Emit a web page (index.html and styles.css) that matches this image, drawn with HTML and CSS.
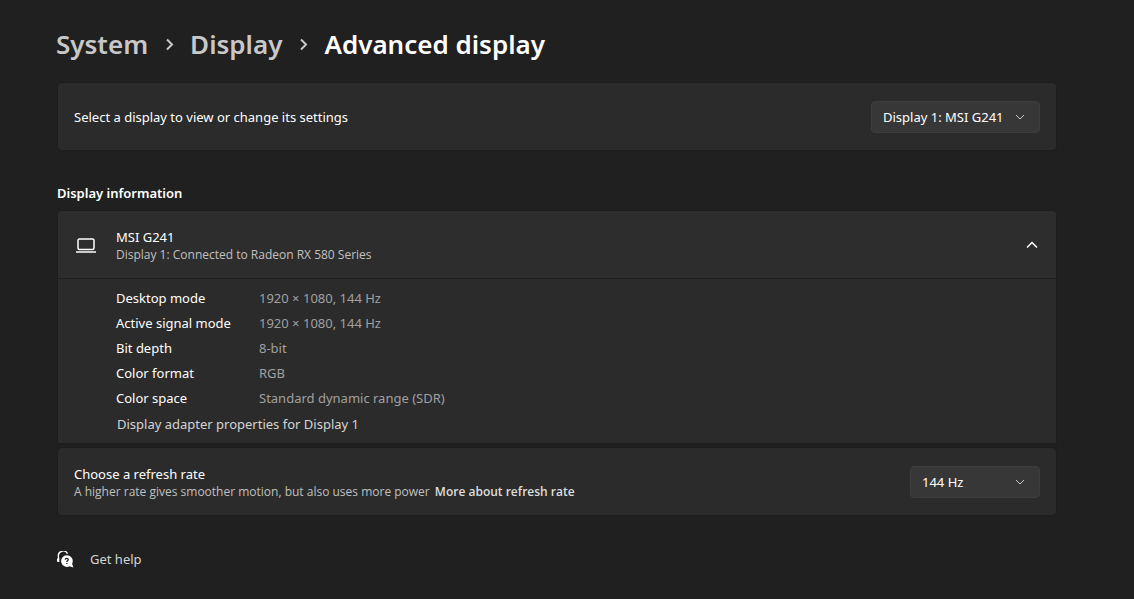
FILE: index.html
```html
<!DOCTYPE html>
<html lang="en">
<head>
<meta charset="utf-8">
<meta name="viewport" content="width=device-width, initial-scale=1">
<title>Advanced display</title>
<link rel="stylesheet" href="styles.css">
</head>
<body>
<main class="page">
  <nav class="breadcrumb" aria-label="Breadcrumb">
    <a class="crumb" href="#system">System</a>
    <svg class="crumb-arrow" viewBox="0 0 10 14" aria-hidden="true"><path d="M2 2.500l5 5-5 5"/></svg>
    <a class="crumb" href="#display">Display</a>
    <svg class="crumb-arrow" viewBox="0 0 10 14" aria-hidden="true"><path d="M2 2.500l5 5-5 5"/></svg>
    <h1 class="crumb crumb-current">Advanced display</h1>
  </nav>

  <section class="card row">
    <label class="label" for="display">Select a display to view or change its settings</label>
    <span class="picker picker-wide">
      <select class="select" id="display"><option>Display 1: MSI G241</option></select>
      <svg class="picker-arrow" viewBox="0 0 10 10" aria-hidden="true"><path d="M1 3l4 4 4-4"/></svg>
    </span>
  </section>

  <h2 class="section-title">Display information</h2>
  <section class="card card-open">
    <button class="row expander" type="button" aria-expanded="true" aria-controls="details">
      <svg class="laptop" viewBox="0 0 20 16" aria-hidden="true"><rect x="2" y="2" width="16" height="10.500" rx="1.500"/><path d="M0 15h20"/></svg>
      <span class="text">
        <span class="label">MSI G241</span>
        <span class="caption">Display 1: Connected to Radeon RX 580 Series</span>
      </span>
      <svg class="collapse-arrow" viewBox="0 0 12 8" aria-hidden="true"><path d="M1 6.500l5-5 5 5"/></svg>
    </button>
    <div class="details" id="details">
      <table class="facts">
        <tr><th scope="row">Desktop mode</th><td>1920 × 1080, 144 Hz</td></tr>
        <tr><th scope="row">Active signal mode</th><td>1920 × 1080, 144 Hz</td></tr>
        <tr><th scope="row">Bit depth</th><td>8-bit</td></tr>
        <tr><th scope="row">Color format</th><td>RGB</td></tr>
        <tr><th scope="row">Color space</th><td>Standard dynamic range (SDR)</td></tr>
      </table>
      <a class="adapter" href="#adapter">Display adapter properties for Display 1</a>
    </div>
  </section>

  <section class="card card-next row">
    <div class="text">
      <label class="label" for="rate">Choose a refresh rate</label>
      <p class="caption">A higher rate gives smoother motion, but also uses more power <a class="more" href="#refresh-rate">More about refresh rate</a></p>
    </div>
    <span class="picker">
      <select class="select" id="rate"><option>144 Hz</option></select>
      <svg class="picker-arrow" viewBox="0 0 10 10" aria-hidden="true"><path d="M1 3l4 4 4-4"/></svg>
    </span>
  </section>

  <a class="help" href="#help">
    <svg class="help-icon" viewBox="0 0 17 17" aria-hidden="true">
      <path class="headset" d="M1.500 9V6a4.800 4.800 0 0 1 9-3.200"/>
      <path class="solid" d="M0 7.500h2.300v3.500H1a1 1 0 0 1-1-1z"/>
      <path class="solid" d="M9.800 4.300a5.800 5.800 0 1 0 2.700 11l3.900 1.200-1.300-3.700a5.800 5.800 0 0 0-5.300-8.500z"/>
      <path class="mark" d="M8.300 8.700c0-1.900 3-1.900 3 0 0 1.100-1.500 1.100-1.500 2.200M9.800 11.900v1.200"/>
    </svg>
    Get help
  </a>
</main>
</body>
</html>
```
FILE: styles.css
```css
* { box-sizing: border-box; }
body {
  margin: 0;
  background: #202020;
  color: #fff;
  font: 13px/18px "Segoe UI", "Noto Sans", "Open Sans", sans-serif;
}
a { color: inherit; text-decoration: none; }
svg { flex: none; fill: none; stroke: currentColor; }

.page { padding: 25px 77px 30px 56px; }

.breadcrumb { display: flex; align-items: center; margin-bottom: 19px; }
.crumb { margin: 0; font-size: 26px; line-height: 38px; font-weight: 600; color: #c8c8c8; }
.crumb-current { color: #fff; }
.crumb-arrow { width: 10px; height: 14px; margin: 0 15px 0 17px; color: #c8c8c8; stroke-width: 2; }

.card, .section-title, .help { margin-left: 1px; }
.card { background: #2b2b2b; border: 1px solid #1d1d1d; border-radius: 5px; }
.card-open { border-radius: 5px 5px 0 0; }
.card-next { margin-top: 3px; }
.row { display: flex; align-items: center; justify-content: space-between; min-height: 69px; padding: 0 16px; }

.text { display: flex; flex-direction: column; padding-top: 2px; }
.caption { margin: 0; font-family: "Segoe UI", "Open Sans", sans-serif; font-size: 12px; color: #c0c0c0; }
.more { margin-left: 2px; font-weight: 600; color: #dedede; }

.picker { display: grid; align-items: center; width: 130px; }
.picker-wide { width: 169px; }
.select, .picker-arrow { grid-area: 1 / 1; }
.select {
  appearance: none;
  width: 100%;
  height: 32px;
  padding: 0 30px 0 11px;
  border: 1px solid #3d3d3d;
  border-radius: 4px;
  background: #373737;
  color: #fff;
  font: inherit;
}
.picker-arrow { justify-self: end; width: 10px; height: 10px; margin-right: 15px; color: #c8c8c8; pointer-events: none; }

.section-title { margin-top: 33px; margin-bottom: 8px; font-size: 13px; line-height: 18px; font-weight: 600; }
.expander {
  width: 100%;
  min-height: 68px;
  padding: 0 18px;
  border: 0;
  border-bottom: 1px solid #1d1d1d;
  border-radius: 4px 4px 0 0;
  background: #2d2d2d;
  color: inherit;
  font: inherit;
  text-align: left;
}
.laptop { width: 20px; height: 16px; margin-right: 20px; stroke-width: 1.5; }
.expander .text { flex: 1; }
.collapse-arrow { width: 12px; height: 8px; stroke-width: 1.5; }

.details { padding: 6px 16px 10px 58px; }
.facts { border-collapse: collapse; }
.facts th, .facts td { height: 25px; padding: 0; font-weight: 400; text-align: left; white-space: nowrap; }
.facts th { width: 143px; }
.facts td { color: #a0a0a0; }
.adapter { display: block; width: fit-content; margin-top: 5px; padding-left: 1px; color: #d4d4d4; }

.help { display: flex; align-items: center; gap: 16px; width: fit-content; margin-top: 34px; color: #d4d4d4; }
.help-icon { width: 17px; height: 17px; color: #fff; }
.headset { stroke-width: 1.3; }
.solid { fill: #fff; stroke: none; }
.mark { stroke: #202020; stroke-width: 1.3; }
```
